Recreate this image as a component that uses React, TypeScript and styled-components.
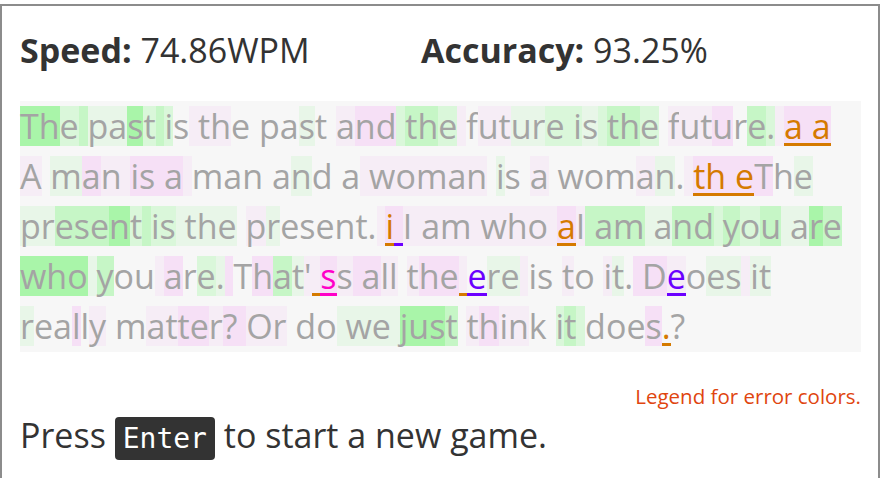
import React from "react";
import styled, { createGlobalStyle } from "styled-components";

const GlobalStyle = createGlobalStyle`
  html, body {
    margin: 0;
    padding: 0;
    background: #ffffff;
  }
  body {
    font-family: "Open Sans", "Noto Sans", sans-serif;
  }
  * { box-sizing: border-box; }
`;

type Err = "x" | "m" | "w";
type Token = [string, string, Err?];

const BG: Record<string, string> = {
  G: "#a9f5a9",
  g: "#c6f6c6",
  l: "#daf7da",
  w: "#e8f6e8",
  P: "#f6e0f6",
  p: "#f6edf6",
  ".": "transparent",
};

const ERR: Record<Err, string> = {
  x: "#d57a00",
  m: "#6c00ff",
  w: "#ff00c8",
};

const LINES: Token[][] = [
  [
    ["The", "GGl"], [" ", "g"], ["past", "wwGl"], [" ", "g"], ["is", "l."], [" ", "p"],
    ["the", "pp."], [" ", "."], ["past", "..w."], [" ", "."], ["and", "pPP"], [" ", "l"],
    ["the", "ggl"], [" ", "p"], ["future", ".ppwwl"], [" ", "l"], ["is", "lw"], [" ", "l"],
    ["the", "ggl"], [" ", "."], ["future.", "pppP.gl"], [" ", "p"], ["a a", "PPP", "x"],
  ],
  [
    ["A", "p"], [" ", "."], ["man", "wPp"], [" ", "p"], ["is", "PP"], [" ", "P"], ["a", "P"],
    [" ", "p"], ["man", "..."], [" ", "."], ["and", ".w."], [" ", "."], ["a", "."], [" ", "p"],
    ["woman", "ppppp"], [" ", "."], ["is", "w."], [" ", "."], ["a", "p"], [" ", "."],
    ["woman.", "...pw."], [" ", "p"], ["th e", "PPPP", "x"], ["The", "P.w"],
  ],
  [
    ["present", "wwgggGl"], [" ", "g"], ["is", "ll"], [" ", "w"], ["the", "www"], [" ", "."],
    ["present.", "pw......"], [" ", "p"], ["i", "P", "x"], [" ", "P", "m"], ["I", "p"], [" ", "p"],
    ["am", "pp"], [" ", "p"], ["who", "ppp"], [" ", "p"], ["a", "P", "x"], ["I", "p"], [" ", "g"],
    ["am", "gg"], [" ", "w"], ["and", "wgg"], [" ", "l"], ["you", "glg"], [" ", "w"], ["are", "wGg"],
  ],
  [
    ["who", "GGG"], [" ", "w"], ["you", "g.."], [" ", "p"], ["are.", "P.lw"], [" ", "P"],
    ["That'", ".Pgwp"], [" ", "p", "x"], ["s", "P", "w"], ["s", "p"], [" ", "P"], ["all", "Ppp"],
    [" ", "."], ["the", "pPP"], [" ", "p", "x"], ["e", ".", "m"], ["re", "ww"], [" ", "p"],
    ["is", ".."], [" ", "."], ["to", "p."], [" ", "."], ["it.", "pw."], [" ", "P"], ["D", "P"],
    ["e", "p", "m"], ["oes", ".ww"], [" ", "p"], ["it", "ww"],
  ],
  [
    ["really", "w..P.p"], [" ", "."], ["matter?", ".ppPPpP"], [" ", "P"], ["Or", "pp"], [" ", "."],
    ["do", ".."], [" ", "w"], ["we", "ww"], [" ", "w"], ["just", "GGGg"], [" ", "."],
    ["think", "pPpp."], [" ", "."], ["it", "lg"], [" ", "l"], ["does", "...P"], [".", ".", "x"],
    ["?", "."],
  ],
];

const Frame = styled.div`
  margin-top: 4px;
  width: 100%;
  border: 2px solid #8c8c8c;
  padding: 21px 17px 24px 18px;
  background: #ffffff;
`;

const Stats = styled.div`
  display: flex;
  font-size: 34px;
  line-height: 46px;
  color: #333333;
`;

const StatItem = styled.div`
  width: 401px;
  flex: none;
`;

const StatLabel = styled.span`
  font-weight: 700;
`;

const TextBlock = styled.div`
  margin-top: 28px;
  background: #f7f7f7;
  padding-bottom: 1px;
`;

const Line = styled.div`
  display: flex;
  align-items: center;
  height: 50px;
  white-space: nowrap;
`;

const Char = styled.span<{ $bg: string; $err?: string }>`
  display: inline-block;
  height: 40px;
  line-height: 40px;
  font-size: 34px;
  white-space: pre;
  background: ${(p) => p.$bg};
  color: ${(p) => p.$err ?? "#a4a4a4"};
  box-shadow: ${(p) => (p.$err ? `inset 0 -3px 0 ${p.$err}` : "none")};
`;

const Legend = styled.div`
  margin-top: 30px;
  text-align: right;
  font-size: 20.5px;
  line-height: 28px;
  color: #e0450f;
`;

const Prompt = styled.div`
  margin-top: 2px;
  font-size: 34px;
  line-height: 46px;
  color: #333333;
`;

const Kbd = styled.kbd`
  display: inline;
  font-family: "DejaVu Sans Mono", "Liberation Mono", monospace;
  font-size: 28px;
  line-height: 1;
  background: #333333;
  color: #ffffff;
  border-radius: 4px;
  padding: 5px 8px 5px 8px;
`;

function TypedLine({ tokens }: { tokens: Token[] }) {
  const chars: { c: string; bg: string; err?: string }[] = [];
  tokens.forEach(([text, codes, err]) => {
    for (let i = 0; i < text.length; i++) {
      const code = codes[i] ?? ".";
      chars.push({ c: text[i], bg: BG[code] ?? "transparent", err: err ? ERR[err] : undefined });
    }
  });
  return (
    <Line>
      {chars.map((ch, i) => (
        <Char key={i} $bg={ch.bg} $err={ch.err}>
          {ch.c}
        </Char>
      ))}
    </Line>
  );
}

export default function App() {
  return (
    <>
      <GlobalStyle />
      <Frame>
        <Stats>
          <StatItem>
            <StatLabel>Speed:</StatLabel> 74.86WPM
          </StatItem>
          <StatItem>
            <StatLabel>Accuracy:</StatLabel> 93.25%
          </StatItem>
        </Stats>
        <TextBlock>
          {LINES.map((tokens, i) => (
            <TypedLine key={i} tokens={tokens} />
          ))}
        </TextBlock>
        <Legend>Legend for error colors.</Legend>
        <Prompt>
          Press <Kbd>Enter</Kbd> to start a new game.
        </Prompt>
      </Frame>
    </>
  );
}
